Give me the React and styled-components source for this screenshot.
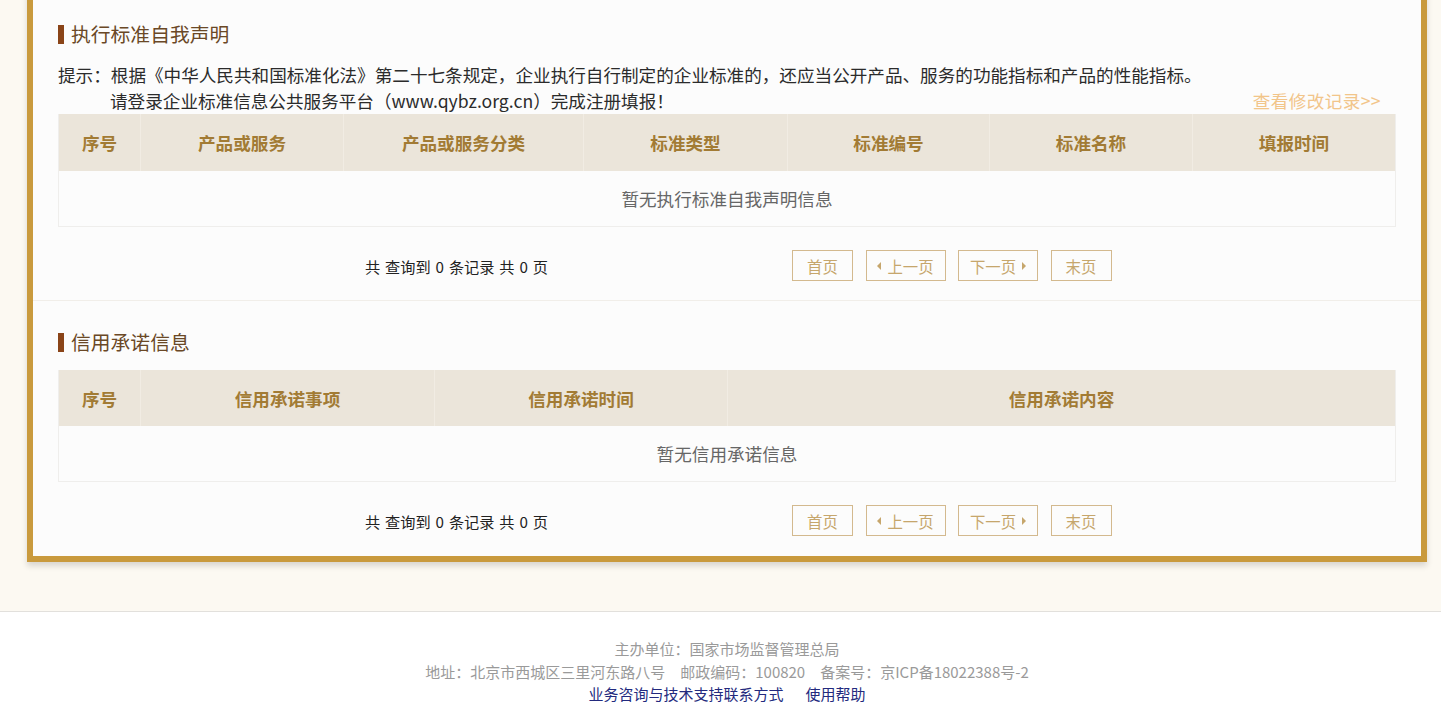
import React from "react";
import styled, { createGlobalStyle } from "styled-components";

const GlobalStyle = createGlobalStyle`
  html, body {
    margin: 0;
    padding: 0;
    overflow: hidden;
    background: #fcf9f2;
  }
  body {
    font-family: "Noto Sans CJK SC", "Noto Sans", sans-serif;
    color: #333;
  }
`;

const Page = styled.div`
  width: 1454px;
`;

const Main = styled.div`
  background: #fcf9f2;
  padding-bottom: 49px;
  border-bottom: 1px solid #e2e0dc;
`;

const Box = styled.div`
  margin: -13px 27px 0;
  border: 6px solid #c99a3d;
  background: #fcfcfc;
  box-shadow: 0 4px 6px rgba(0, 0, 0, 0.14);
`;

const Section = styled.section`
  padding: 29px 25px ${(p) => (p.$last ? "20px" : "19px")};
  border-bottom: ${(p) => (p.$last ? "none" : "1px solid #f1eee9")};
`;

const Title = styled.h2`
  margin: 0 0 16px;
  display: flex;
  align-items: center;
  height: 24px;
  font-size: 19.8px;
  font-weight: normal;
  color: #6a4826;
  line-height: 24px;
  &::before {
    content: "";
    display: block;
    width: 6px;
    height: 19px;
    background: #8a4418;
    margin-right: 7px;
  }
`;

const Hint = styled.div`
  font-size: 17.6px;
  line-height: 26px;
  color: #2b2b2b;
`;

const HintRow = styled.div`
  display: flex;
  justify-content: space-between;
  height: 26px;
  padding-left: ${(p) => (p.$indent ? "52px" : "0")};
  padding-right: 15px;
`;

const RecordLink = styled.a`
  color: #f2c58a;
  text-decoration: none;
  font-size: 17.6px;
  letter-spacing: 0.4px;
`;

const Table = styled.div`
  border: 1px solid #efeeec;
  border-top: none;
`;

const Row = styled.div`
  display: grid;
  grid-template-columns: ${(p) => p.$cols};
  height: ${(p) => p.$h || 55}px;
  background: ${(p) => (p.$head ? "#ebe5da" : "#fcfcfc")};
`;

const HeadCell = styled.div`
  display: flex;
  align-items: center;
  justify-content: center;
  font-size: 17.6px;
  font-weight: bold;
  color: #a27b34;
  border-left: ${(p) => (p.$first ? "none" : "1px solid #f1ece3")};
`;

const EmptyCell = styled.div`
  grid-column: 1 / -1;
  display: flex;
  align-items: center;
  justify-content: center;
  font-size: 17.6px;
  color: #666;
`;

const Pager = styled.div`
  display: flex;
  align-items: center;
  margin-top: 23px;
  height: 31px;
  padding-left: 307px;
`;

const PagerText = styled.div`
  font-size: 15.2px;
  color: #222;
  width: 427px;
  word-spacing: 1.5px;
`;

const Buttons = styled.div`
  display: flex;
  gap: 12.5px;
`;

const PageButton = styled.button`
  box-sizing: border-box;
  width: ${(p) => p.$w}px;
  height: 31px;
  border: 1px solid #d3b98e;
  background: #fcfcfc;
  color: #c6a66c;
  font-family: inherit;
  font-size: 15.4px;
  display: flex;
  align-items: center;
  justify-content: center;
  gap: 6px;
  padding: 0;
  cursor: pointer;
`;

const Arrow = styled.span`
  width: 0;
  height: 0;
  border-top: 4px solid transparent;
  border-bottom: 4px solid transparent;
  ${(p) =>
    p.$dir === "left"
      ? "border-right: 4px solid #c6a66c;"
      : "border-left: 4px solid #c6a66c;"}
`;

const Footer = styled.footer`
  background: #ffffff;
  padding: 26px 0 20px;
  text-align: center;
  font-size: 15px;
  line-height: 22.5px;
  color: #9a9a9a;
`;

const FootLine = styled.div``;

const Gap = styled.span`
  margin-left: 15px;
`;

const FootLink = styled.a`
  color: #232a7e;
  text-decoration: none;
  margin: 0 11px;
`;

const cols1 = "81px 203px 240px 204px 202px 203px 1fr";
const cols2 = "81px 294px 293px 1fr";

function Pagination() {
  return (
    <Pager>
      <PagerText>共 查询到 0 条记录 共 0 页</PagerText>
      <Buttons>
        <PageButton $w={61}>首页</PageButton>
        <PageButton $w={80}>
          <Arrow $dir="left" />
          上一页
        </PageButton>
        <PageButton $w={80}>
          下一页
          <Arrow $dir="right" />
        </PageButton>
        <PageButton $w={61}>末页</PageButton>
      </Buttons>
    </Pager>
  );
}

function DataTable({ cols, heads, empty, headH }) {
  return (
    <Table>
      <Row $head $cols={cols} $h={headH}>
        {heads.map((h, i) => (
          <HeadCell key={h} $first={i === 0}>
            {h}
          </HeadCell>
        ))}
      </Row>
      <Row $cols={cols}>
        <EmptyCell>{empty}</EmptyCell>
      </Row>
    </Table>
  );
}

export default function App() {
  return (
    <Page>
      <GlobalStyle />
      <Main>
        <Box>
          <Section>
            <Title>执行标准自我声明</Title>
            <Hint>
              <HintRow>
                提示：根据《中华人民共和国标准化法》第二十七条规定，企业执行自行制定的企业标准的，还应当公开产品、服务的功能指标和产品的性能指标。
              </HintRow>
              <HintRow $indent>
                <span>请登录企业标准信息公共服务平台（www.qybz.org.cn）完成注册填报！</span>
                <RecordLink href="#">查看修改记录&gt;&gt;</RecordLink>
              </HintRow>
            </Hint>
            <DataTable
              cols={cols1}
              headH={57}
              heads={["序号", "产品或服务", "产品或服务分类", "标准类型", "标准编号", "标准名称", "填报时间"]}
              empty="暂无执行标准自我声明信息"
            />
            <Pagination />
          </Section>
          <Section $last>
            <Title>信用承诺信息</Title>
            <DataTable
              cols={cols2}
              headH={56}
              heads={["序号", "信用承诺事项", "信用承诺时间", "信用承诺内容"]}
              empty="暂无信用承诺信息"
            />
            <Pagination />
          </Section>
        </Box>
      </Main>
      <Footer>
        <FootLine>主办单位：国家市场监督管理总局</FootLine>
        <FootLine>
          地址：北京市西城区三里河东路八号
          <Gap>邮政编码：100820</Gap>
          <Gap>备案号：京ICP备18022388号-2</Gap>
        </FootLine>
        <FootLine>
          <FootLink href="#">业务咨询与技术支持联系方式</FootLink>
          <FootLink href="#">使用帮助</FootLink>
        </FootLine>
      </Footer>
    </Page>
  );
}
